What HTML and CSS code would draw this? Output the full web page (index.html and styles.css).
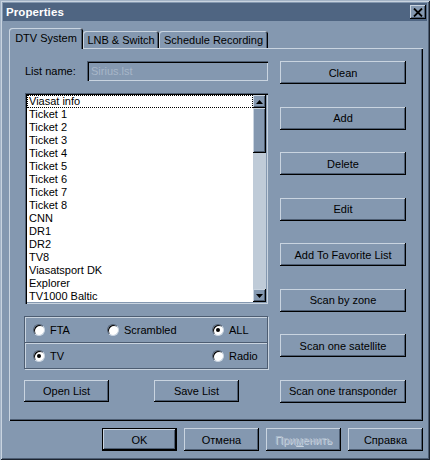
FILE: index.html
```html
<!DOCTYPE html>
<html>
<head>
<meta charset="utf-8">
<link rel="stylesheet" href="styles.css">
</head>
<body>
<div class="window">
  <div class="titlebar">
    <span class="title">Properties</span>
    <span class="close">
      <svg width="10" height="9" viewBox="0 0 10 9"><path d="M1 0.5 L9 8.5 M9 0.5 L1 8.5" stroke="#000" stroke-width="1.8" fill="none"/></svg>
    </span>
  </div>
  <div class="body">
    <div class="tabs">
      <div class="tab active">DTV System</div>
      <div class="tab w-lnb">LNB &amp; Switch</div>
      <div class="tab w-sched">Schedule Recording</div>
    </div>
    <div class="panel">
      <div class="left">
        <div class="namerow">
          <span class="label">List name:</span>
          <div class="input">Sirius.lst</div>
        </div>
        <div class="listbox">
          <div class="items">
            <div class="item focus">Viasat info</div>
            <div class="item">Ticket 1</div>
            <div class="item">Ticket 2</div>
            <div class="item">Ticket 3</div>
            <div class="item">Ticket 4</div>
            <div class="item">Ticket 5</div>
            <div class="item">Ticket 6</div>
            <div class="item">Ticket 7</div>
            <div class="item">Ticket 8</div>
            <div class="item">CNN</div>
            <div class="item">DR1</div>
            <div class="item">DR2</div>
            <div class="item">TV8</div>
            <div class="item">Viasatsport DK</div>
            <div class="item">Explorer</div>
            <div class="item">TV1000 Baltic</div>
          </div>
          <div class="scrollbar">
            <div class="sbtn"><svg width="7" height="4" viewBox="0 0 7 4"><path d="M3.5 0 L7 4 L0 4 Z" fill="#000"/></svg></div>
            <div class="thumb"></div>
            <div class="track"></div>
            <div class="sbtn"><svg width="7" height="4" viewBox="0 0 7 4"><path d="M0 0 L7 0 L3.5 4 Z" fill="#000"/></svg></div>
          </div>
        </div>
        <div class="group">
          <div class="grow">
            <label class="radio"><span class="dot"></span>FTA</label>
            <label class="radio"><span class="dot"></span>Scrambled</label>
            <label class="radio"><span class="dot on"></span>ALL</label>
          </div>
          <div class="grow second">
            <label class="radio"><span class="dot on"></span>TV</label>
            <span></span>
            <label class="radio"><span class="dot"></span>Radio</label>
          </div>
        </div>
        <div class="listbtns">
          <div class="btn small">Open List</div>
          <div class="btn small">Save List</div>
        </div>
      </div>
      <div class="right">
        <div class="btn wide">Clean</div>
        <div class="btn wide">Add</div>
        <div class="btn wide">Delete</div>
        <div class="btn wide">Edit</div>
        <div class="btn wide">Add To Favorite List</div>
        <div class="btn wide">Scan by zone</div>
        <div class="btn wide">Scan one satellite</div>
        <div class="btn wide">Scan one transponder</div>
      </div>
    </div>
    <div class="footer">
      <div class="btn dlg default">OK</div>
      <div class="btn dlg">Отмена</div>
      <div class="btn dlg disabled">При<u>м</u>енить</div>
      <div class="btn dlg">Справка</div>
    </div>
  </div>
</div>
</body>
</html>
```
FILE: styles.css
```css
* { box-sizing: border-box; }
body {
  margin: 0;
  background: #8498b0;
  font-family: "Liberation Sans", Arial, sans-serif;
  font-size: 11px;
  color: #000;
}
.window {
  width: 430px;
  height: 460px;
  background: #8498b0;
  padding: 3px;
  display: flex;
  flex-direction: column;
  box-shadow: inset 1px 1px #a3b3c6, inset -1px -1px #1c2430, inset 2px 2px #c9d4e0, inset -2px -2px #4d5d72;
}
.titlebar {
  height: 18px;
  background: #4f6582;
  display: flex;
  align-items: center;
  justify-content: space-between;
  padding: 0 1px 0 3px;
}
.title {
  color: #fff;
  font-weight: bold;
  font-size: 11.5px;
  letter-spacing: 0.1px;
}
.close {
  width: 16px;
  height: 14px;
  background: #8498b0;
  display: flex;
  align-items: center;
  justify-content: center;
  box-shadow: inset -1px -1px #000, inset 1px 1px #c9d4e0, inset -2px -2px #4d5d72;
}
.body {
  display: flex;
  flex-direction: column;
  padding: 7px 5px 0 6px;
}
.tabs {
  display: flex;
  align-items: flex-end;
  height: 20px;
  position: relative;
  z-index: 2;
}
.tab {
  height: 17px;
  display: flex;
  align-items: center;
  justify-content: center;
  padding-top: 1px;
  background: #8498b0;
  border-radius: 3px 3px 0 0;
  box-shadow: inset 1px 1px #c9d4e0, inset -1px 0 #000, inset -2px 0 #4d5d72;
}
.tab.active {
  width: 74px;
  height: 21px;
  margin-bottom: -1px;
  padding-bottom: 3px;
}
.w-lnb { width: 76px; }
.w-sched { width: 109px; }
.panel {
  width: 414px;
  height: 373px;
  background: #8498b0;
  display: flex;
  gap: 12px;
  padding: 13px 17px 0 15px;
  box-shadow: inset 1px 1px #c9d4e0, inset -1px -1px #000, inset -2px -2px #4d5d72;
}
.left {
  width: 244px;
  display: flex;
  flex-direction: column;
}
.namerow {
  height: 20px;
  display: flex;
  align-items: center;
  padding-left: 1px;
}
.label {
  width: 62px;
}
.input {
  width: 181px;
  height: 20px;
  display: flex;
  align-items: center;
  padding-left: 4px;
  color: #a7b6c8;
  box-shadow: inset 1px 1px #4d5d72, inset 2px 2px #000, inset -1px -1px #c9d4e0, inset -2px -2px #8498b0;
}
.listbox {
  margin: 12px 0 0 1px;
  width: 243px;
  height: 211px;
  background: #fff;
  padding: 2px;
  display: flex;
  box-shadow: inset 1px 1px #4d5d72, inset 2px 2px #000, inset -1px -1px #c9d4e0, inset -2px -2px #8498b0;
}
.items {
  flex: 1;
  overflow: hidden;
}
.item {
  height: 13px;
  line-height: 13px;
  padding-left: 2px;
  white-space: nowrap;
}
.item.focus {
  outline: 1px dotted #000;
  outline-offset: -1px;
}
.scrollbar {
  width: 13px;
  display: flex;
  flex-direction: column;
  background: #bfcbd8;
}
.sbtn {
  height: 13px;
  background: #8498b0;
  display: flex;
  align-items: center;
  justify-content: center;
  box-shadow: inset -1px -1px #000, inset 1px 1px #c9d4e0, inset -2px -2px #4d5d72;
}
.thumb {
  height: 45px;
  background: #8498b0;
  box-shadow: inset -1px -1px #000, inset 1px 1px #c9d4e0, inset -2px -2px #4d5d72;
}
.track { flex: 1; }
.group {
  margin-top: 12px;
  height: 53px;
  display: flex;
  flex-direction: column;
  border: 1px solid #4d5d72;
  box-shadow: inset 1px 1px #c9d4e0, 1px 1px #c9d4e0;
}
.grow {
  flex: 1;
  display: grid;
  grid-template-columns: 74px 105px 1fr;
  align-items: center;
  padding-left: 8px;
}
.grow.second {
  border-top: 1px solid #4d5d72;
  box-shadow: inset 0 1px #c9d4e0;
}
.radio {
  display: flex;
  align-items: center;
  gap: 5px;
}
.dot {
  width: 12px;
  height: 12px;
  border-radius: 50%;
  background: #fff;
  border: 1px solid;
  border-color: #4d5d72 #c9d4e0 #c9d4e0 #4d5d72;
  box-shadow: inset 1px 1px #000;
  display: flex;
  align-items: center;
  justify-content: center;
}
.dot.on::after {
  content: "";
  width: 4px;
  height: 4px;
  border-radius: 50%;
  background: #000;
}
.listbtns {
  margin-top: 11px;
  display: flex;
  gap: 45px;
}
.btn {
  background: #8498b0;
  display: flex;
  align-items: center;
  justify-content: center;
  white-space: nowrap;
  box-shadow: inset -1px -1px #000, inset 1px 1px #c9d4e0, inset -2px -2px #4d5d72;
}
.btn.small {
  width: 85px;
  height: 22px;
}
.right {
  width: 126px;
  height: 342px;
  display: flex;
  flex-direction: column;
  justify-content: space-between;
}
.btn.wide {
  height: 23px;
}
.footer {
  margin-top: 7px;
  display: flex;
  justify-content: flex-end;
  gap: 7px;
  width: 414px;
}
.btn.dlg {
  width: 75px;
  height: 23px;
}
.btn.default {
  border: 1px solid #000;
  box-shadow: inset -1px -1px #000, inset 1px 1px #c9d4e0, inset -2px -2px #4d5d72;
}
.btn.disabled {
  color: #a7b6c8;
  text-shadow: 1px 1px #c9d4e0;
}
```
